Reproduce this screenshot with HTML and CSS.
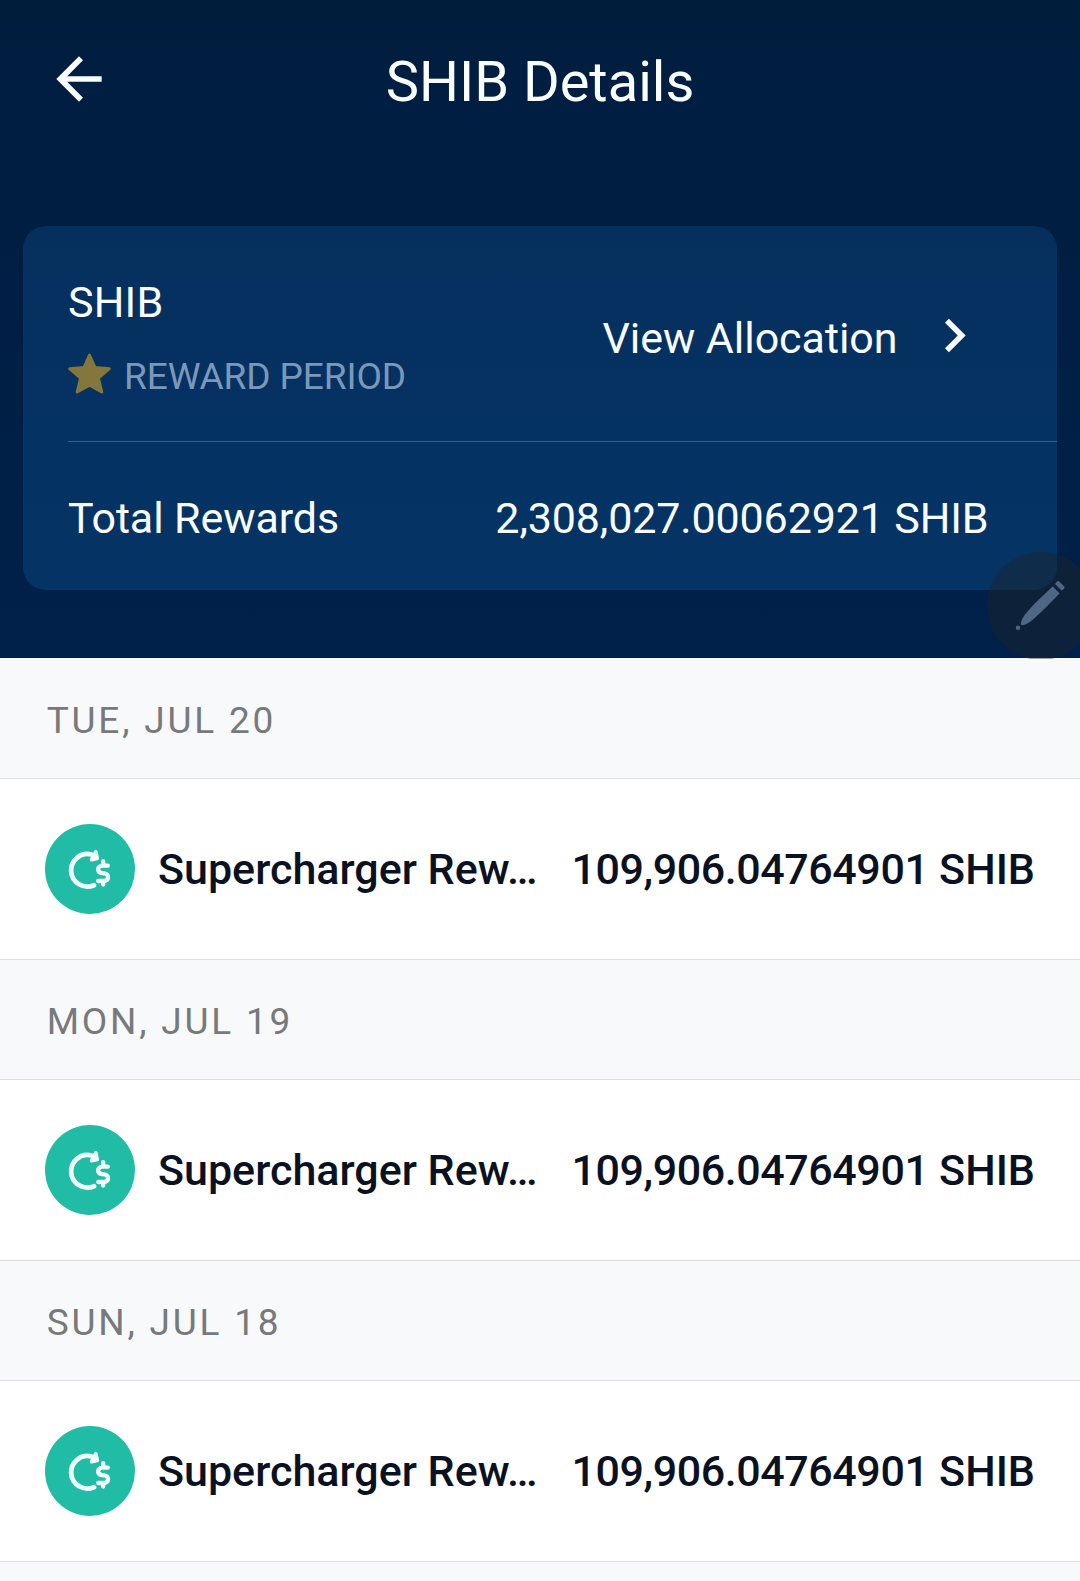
FILE: index.html
```html
<!DOCTYPE html>
<html lang="en">
<head>
  <meta charset="UTF-8">
  <title>SHIB Details</title>
  <link rel="stylesheet" href="styles.css">
</head>
<body>
  <!-- reward icon, reused in every row -->
  <svg width="0" height="0" class="defs">
    <symbol id="reward" viewBox="0 0 90 90">
      <g fill="none" stroke="#f0fffb" stroke-width="4.8" stroke-linecap="round" stroke-linejoin="round">
        <path d="M49 61.2 A16.3 16.3 0 1 1 46.5 30.5"/>
        <path d="M50.8 27.8 L52.2 34.4 L46.6 35.6 Z" fill="#f0fffb" stroke-width="3.8"/>
        <path d="M62.8 41.7 H57.6 C51.8 41.7 51.4 48.6 57 49.1 L59.2 49.3 C64.6 49.8 64.2 57 58.8 57 H53.2 M58.2 37.2 V41.4 M58.2 57.3 V60.6" stroke-width="4.3"/>
      </g>
    </symbol>
  </svg>

  <header class="top">
    <div class="navbar">
      <svg class="back" viewBox="0 0 24 24"><path d="M20 11H7.83l5.59-5.59L12 4l-8 8 8 8 1.41-1.41L7.83 13H20v-2z"/></svg>
      <h1>SHIB Details</h1>
    </div>

    <div class="card">
      <div class="card-row allocation">
        <div>
          <div class="coin">SHIB</div>
          <div class="period">
            <svg class="star" viewBox="0 0 43 41"><path d="M21.5 2 L27 14.6 L41.3 15.7 L30.4 25.2 L33.8 39 L21.5 32.2 L9.2 39 L12.6 25.2 L1.7 15.7 L16 14.6 Z"/></svg>
            <span>REWARD PERIOD</span>
          </div>
        </div>
        <div class="view">
          <span>View Allocation</span>
          <svg class="chevron" viewBox="0 0 24 24"><path d="M10 6L8.59 7.41 13.17 12l-4.58 4.59L10 18l6-6z"/></svg>
        </div>
      </div>
      <div class="card-row total">
        <span class="total-label">Total Rewards</span>
        <span class="total-value">2,308,027.00062921 SHIB</span>
      </div>
    </div>
  </header>

  <main>
    <h2 class="date">TUE, JUL 20</h2>
    <div class="reward-row">
      <svg class="reward-icon"><use href="#reward"/></svg>
      <span class="name">Supercharger Rew…</span>
      <span class="amount"><span class="num">109,906.04764901</span> SHIB</span>
    </div>
    <h2 class="date">MON, JUL 19</h2>
    <div class="reward-row">
      <svg class="reward-icon"><use href="#reward"/></svg>
      <span class="name">Supercharger Rew…</span>
      <span class="amount"><span class="num">109,906.04764901</span> SHIB</span>
    </div>
    <h2 class="date">SUN, JUL 18</h2>
    <div class="reward-row">
      <svg class="reward-icon"><use href="#reward"/></svg>
      <span class="name">Supercharger Rew…</span>
      <span class="amount"><span class="num">109,906.04764901</span> SHIB</span>
    </div>
    <div class="date next"></div>
  </main>

  <!-- floating pen button -->
  <div class="pen">
    <svg viewBox="0 0 108 108">
      <path d="M65.7 34.5 L72.6 41.2 C64 50 54 61 44.7 68.5 C41.5 71 37.5 73.6 34.6 73.2 C32.9 72.4 34.4 67.4 38 62.6 C45 53.5 56 43.5 65.7 34.5 Z"/>
      <path d="M68 32 L70 29.4 Q71 28.5 72 29.3 L77.2 34.6 Q78 35.6 77.2 36.5 L74.6 38.5 Z"/>
      <circle cx="31" cy="75.7" r="2.2"/>
    </svg>
  </div>
</body>
</html>
```

FILE: styles.css
```css
* {
  box-sizing: border-box;
}

body {
  margin: 0;
  background: #fff;
  font-family: Roboto, sans-serif;
}

.defs {
  position: absolute;
}

/* header */
.top {
  height: 658px;
  padding: 0 23px;
  background: linear-gradient(#001d3b, #001e41 12%, #001e42 35%, #00214b);
  color: #fafdff;
}

.navbar {
  display: grid;
  grid-template-columns: 68px 1fr 68px;
  align-items: center;
  height: 226px;
  padding: 0 22px 68px;
}

.back {
  width: 68px;
  height: 68px;
  fill: #fafdff;
}

h1 {
  margin: 6px 0 0;
  font-size: 56px;
  font-weight: 400;
  line-height: 66px;
  text-align: center;
}

.card {
  height: 364px;
  width: 1034px;
  padding-left: 45px;
  border-radius: 23px;
  background: linear-gradient(#05305d, #053161 30%, #043465);
  font-size: 43px;
}

.card-row {
  display: flex;
  justify-content: space-between;
}

.allocation {
  height: 216px;
  padding-top: 50px;
  border-bottom: 1px solid #375f84;
}

.coin {
  line-height: 52px;
  letter-spacing: 0.2px;
}

.period {
  display: flex;
  align-items: center;
  gap: 13px;
  margin-top: 24px;
  height: 44px;
  font-size: 37px;
  letter-spacing: -0.1px;
  color: #7c98b9;
}

.period span {
  padding-top: 4px;
}

.star {
  width: 43px;
  height: 41px;
  margin-bottom: 1px;
  fill: #83773b;
  stroke: #83773b;
  stroke-width: 3;
  stroke-linejoin: round;
}

.view {
  display: flex;
  height: 120px;
  align-items: center;
  padding-right: 69px;
  gap: 23.5px;
}

.view span {
  padding-top: 4px;
  letter-spacing: -0.05px;
}

.chevron {
  width: 67px;
  height: 67px;
  margin-bottom: 2px;
  fill: #fafdff;
}

.total {
  height: 147px;
  align-items: center;
  padding: 4px 68.5px 0 0;
}

.total-label {
  letter-spacing: -0.1px;
}

.total-value {
  letter-spacing: -0.13px;
}

/* reward list */
.date {
  display: flex;
  align-items: center;
  height: 121px;
  margin: 0;
  padding: 4px 46.7px 0;
  border-top: 1px solid #dcdfe1;
  border-bottom: 1px solid #dcdfe1;
  background: #f7f9fb;
  color: #77797b;
  font-size: 37px;
  font-weight: 400;
  letter-spacing: 2.8px;
}

.date:first-child {
  border-top: 0;
}

.date.next {
  height: 20px;
  padding: 0;
  border-bottom: 0;
}

.reward-row {
  display: flex;
  align-items: center;
  height: 180px;
  padding: 0 45px;
  color: #0a1222;
  font-size: 43px;
  font-weight: 500;
}

.reward-icon {
  flex: none;
  width: 90px;
  height: 90px;
  border-radius: 50%;
  background: #21bca5;
}

.name {
  margin-left: 23px;
  white-space: nowrap;
}

.amount {
  margin-left: auto;
  white-space: nowrap;
}

.num {
  letter-spacing: -0.42px;
}

.pen {
  position: absolute;
  left: 987px;
  top: 552px;
  width: 93px;
  height: 107px;
  overflow: hidden;
}

.pen svg {
  width: 108px;
  height: 108px;
  border-radius: 50%;
  background: rgba(32, 36, 34, 0.4);
  fill: #4f6685;
}
```
